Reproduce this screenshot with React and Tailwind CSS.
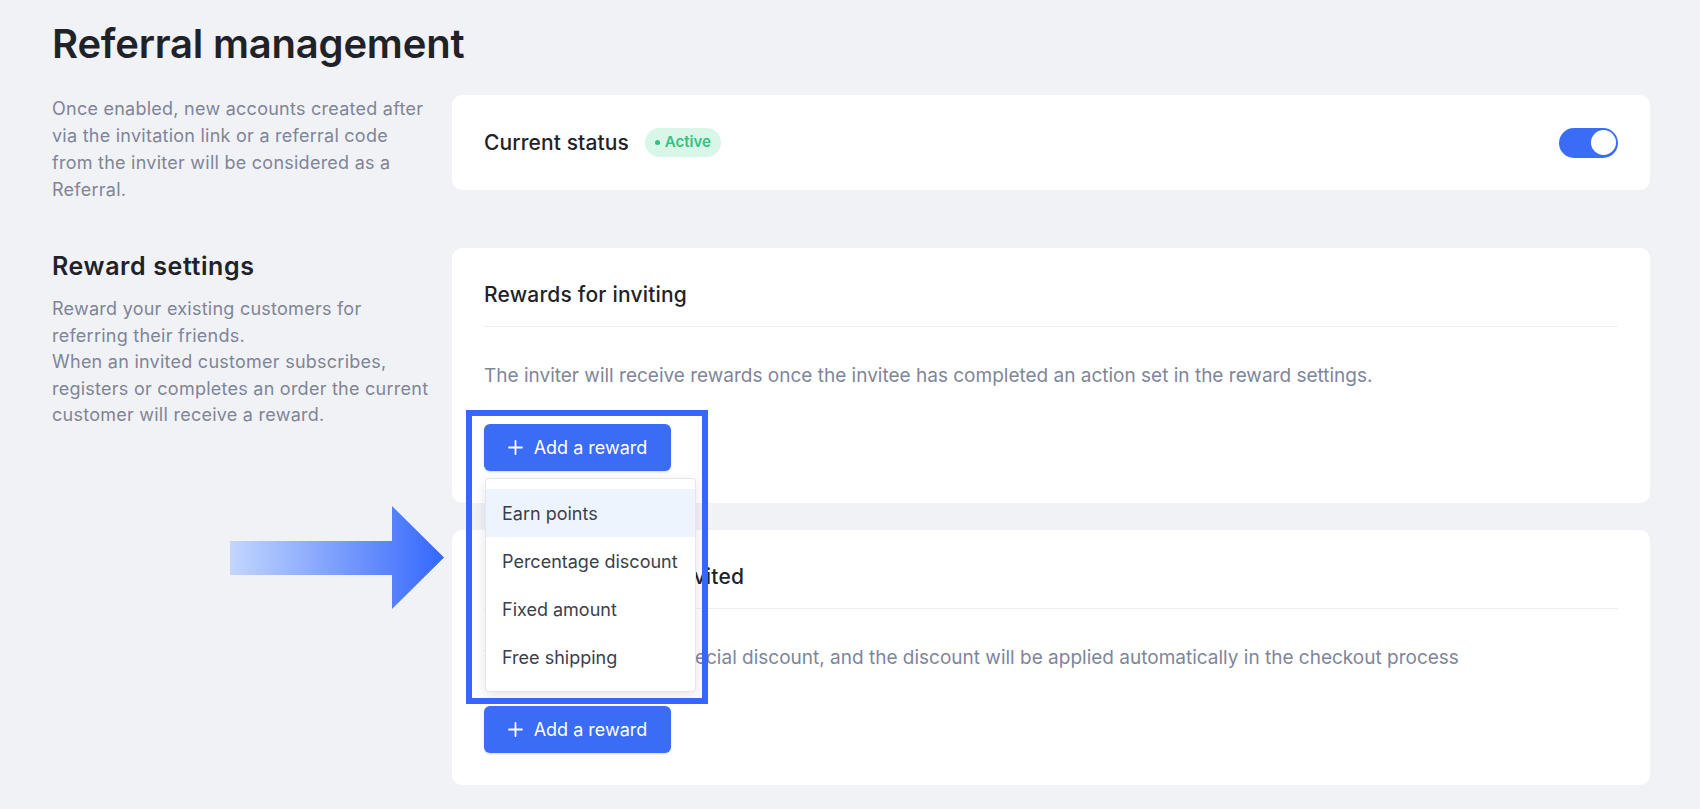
import React from "react";

function Plus() {
  return (
    <svg width="15" height="15" viewBox="0 0 15 15" fill="none" stroke="white" strokeWidth="1.8" strokeLinecap="round">
      <path d="M7.5 1v13M1 7.5h13" />
    </svg>
  );
}

function AddButton() {
  return (
    <button className="flex h-[47px] w-[187px] items-center justify-center gap-[11px] rounded-[6px] bg-[#3a6cf6] text-[18px] text-white shadow-[0_1px_2px_rgba(58,108,246,0.25)]">
      <Plus />
      <span>Add a reward</span>
    </button>
  );
}

function RewardCard({ title, desc, open }) {
  return (
    <div className="rounded-[10px] bg-white px-8 pt-8 pb-8">
      <div className="border-b border-[#eceef2] pb-4 text-[21px] font-medium leading-[30px] tracking-[0.2px] text-[#1f2329]">{title}</div>
      <p className="mt-[35px] whitespace-nowrap text-[19px] leading-[27px] text-[#80869a]">{desc}</p>
      <div className="relative mt-[35px] w-[187px]">
        <AddButton />
        {open && (
          <>
            <div className="absolute left-[1px] top-[54px] z-20 w-[211px] rounded-[4px] border border-[#e4e6eb] bg-white py-[10px] shadow-[0_4px_14px_rgba(0,0,0,0.10)]">
              {["Earn points", "Percentage discount", "Fixed amount", "Free shipping"].map((t, i) => (
                <div
                  key={t}
                  className={
                    "flex h-[48px] items-center pl-4 text-[18px] text-[#3b3f4a] " +
                    (i === 0 ? "bg-[#eef4fe]" : "")
                  }
                >
                  {t}
                </div>
              ))}
            </div>
            <div className="pointer-events-none absolute left-[-18px] top-[-14px] z-30 h-[294px] w-[242px] border-[6px] border-[#3467fb]" />
          </>
        )}
      </div>
    </div>
  );
}

export default function App() {
  return (
    <div className="relative min-h-[809px] bg-[#f1f2f6] pl-[52px] pr-[50px] pt-[20px] pb-[22px] font-[Inter,sans-serif]">
      <h1 className="text-[40px] font-semibold leading-[48px] tracking-[-0.2px] text-[#1f2329]">Referral management</h1>
      <div className="mt-[27px] grid grid-cols-[380px_1fr] gap-x-5 gap-y-[45px]">
        <p className="whitespace-nowrap text-[18px] leading-[27px] tracking-[0.25px] text-[#7f8596]">
          Once enabled, new accounts created after
          <br />
          via the invitation link or a referral code
          <br />
          from the inviter will be considered as a
          <br />
          Referral.
        </p>
        <div className="flex h-[95px] items-center justify-between rounded-[10px] bg-white px-8">
          <div className="flex items-center gap-4">
            <span className="text-[21px] font-medium tracking-[0.1px] text-[#1f2329]">Current status</span>
            <span className="flex h-[29px] items-center gap-[5px] rounded-full bg-[#d8f7e8] px-[10px] text-[15px] font-semibold text-[#35c07f]">
              <span className="h-[5px] w-[5px] rounded-full bg-[#35c07f]" />
              Active
            </span>
          </div>
          <div className="flex h-[30px] w-[59px] items-center justify-end rounded-full bg-[#3a6cf6] px-[2px]">
            <div className="h-[25px] w-[25px] rounded-full bg-white" />
          </div>
        </div>
        <div>
          <h2 className="mt-[2px] text-[25px] font-semibold leading-8 tracking-[0.6px] text-[#1f2329]">Reward settings</h2>
          <p className="mt-[14px] whitespace-nowrap text-[18px] leading-[26.5px] tracking-[0.25px] text-[#7f8596]">
            Reward your existing customers for
            <br />
            referring their friends.
            <br />
            When an invited customer subscribes,
            <br />
            registers or completes an order the current
            <br />
            customer will receive a reward.
          </p>
        </div>
        <div className="flex flex-col gap-[27px]">
          <RewardCard
            title="Rewards for inviting"
            desc="The inviter will receive rewards once the invitee has completed an action set in the reward settings."
            open
          />
          <RewardCard
            title="Rewards for being invited"
            desc="The invitee will get a special discount, and the discount will be applied automatically in the checkout process"
          />
        </div>
      </div>
      <svg className="absolute left-[230px] top-[506px]" width="214" height="103" viewBox="0 0 214 103">
        <defs>
          <linearGradient id="ag" x1="0" y1="0" x2="1" y2="0">
            <stop offset="0" stopColor="#c3d6ff" />
            <stop offset="1" stopColor="#3467fb" />
          </linearGradient>
        </defs>
        <polygon points="0,35 162,35 162,0 214,51.5 162,103 162,69 0,69" fill="url(#ag)" />
      </svg>
    </div>
  );
}
